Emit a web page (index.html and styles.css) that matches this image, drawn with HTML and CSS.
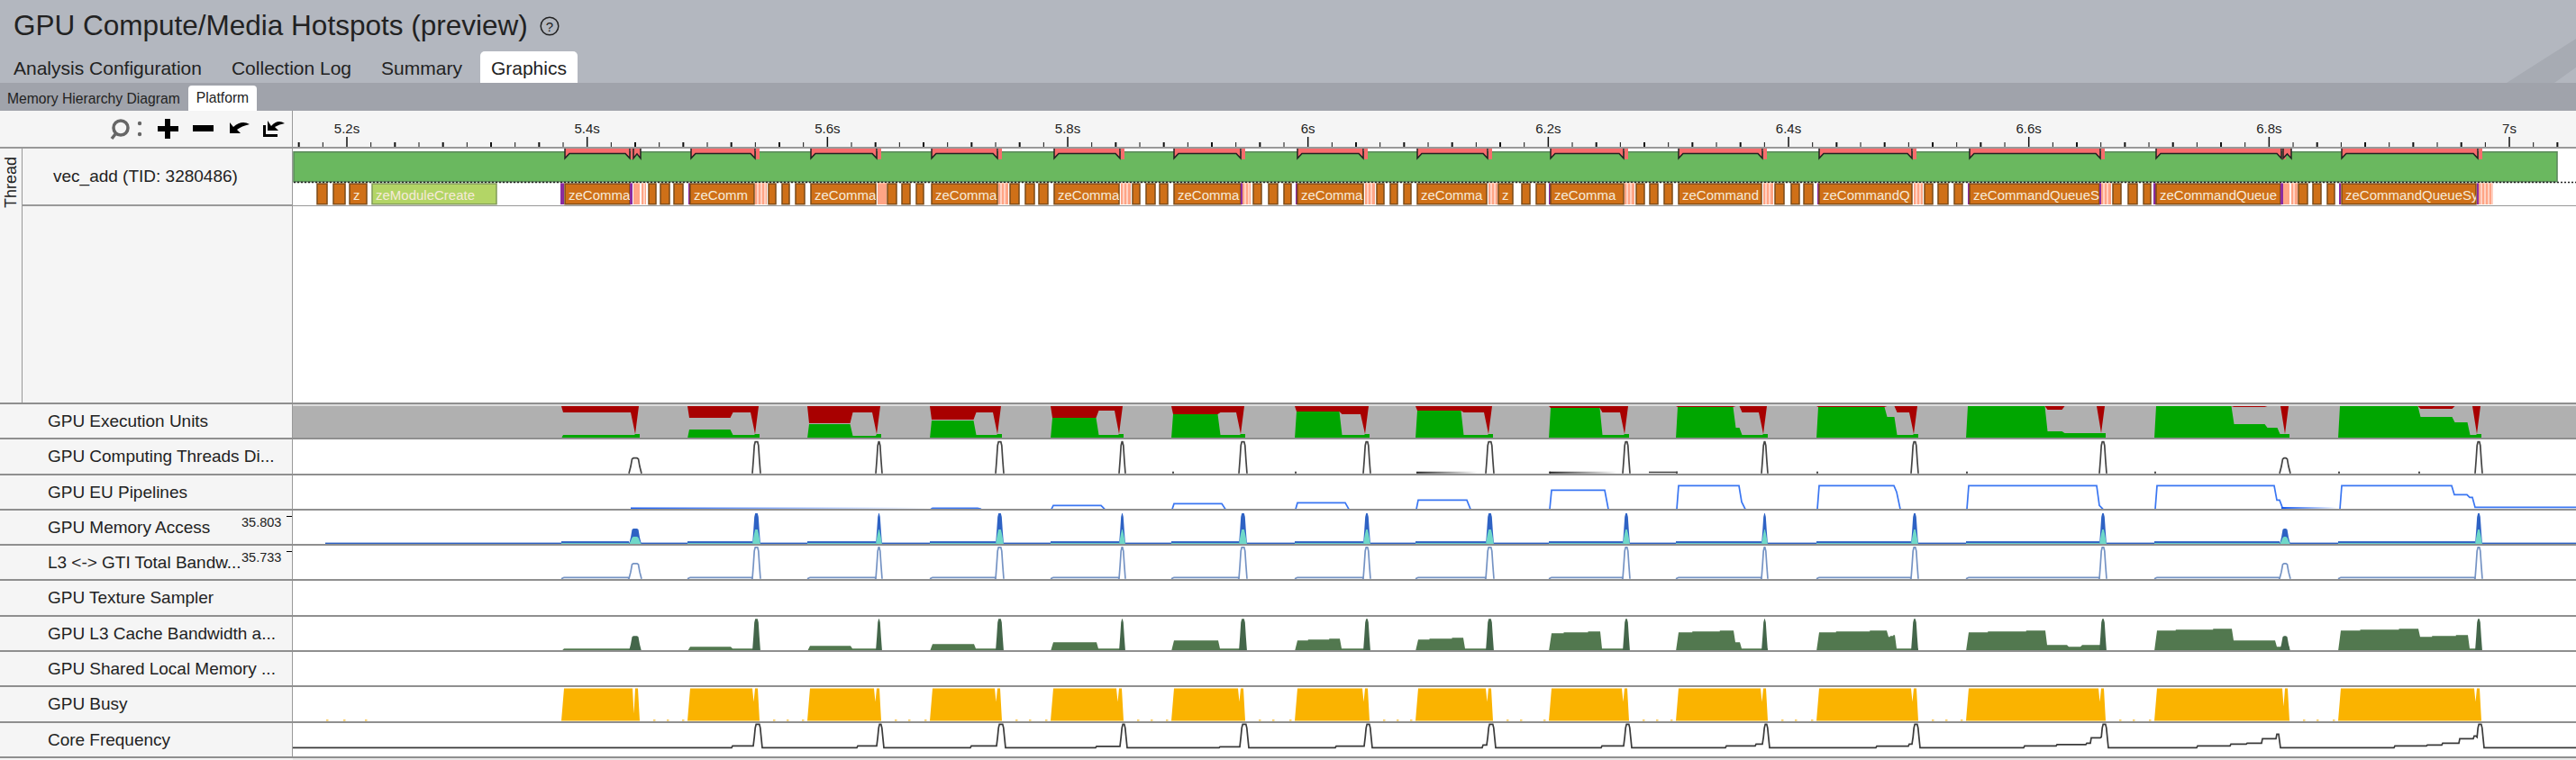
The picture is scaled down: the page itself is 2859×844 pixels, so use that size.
FILE: index.html
```html
<!DOCTYPE html>
<html lang="en">
<head>
    <meta charset="UTF-8">
    <title>GPU Compute/Media Hotspots (preview)</title>
    <link rel="stylesheet" href="styles.css">
</head>
<body>
    <header class="header">
        <div class="titleLine">
            <h1 class="title">GPU Compute/Media Hotspots (preview)</h1>
            <svg class="helpIcon" viewBox="0 0 22 22">
                <circle cx="11" cy="11" r="9.8"></circle>
                <text x="11" y="16.5">?</text>
            </svg>
        </div>
        <nav class="tabs">
            <span class="tab">Analysis Configuration</span>
            <span class="tab">Collection Log</span>
            <span class="tab">Summary</span>
            <span class="tab tabActive">Graphics</span>
        </nav>
    </header>
    <nav class="subTabs">
        <span class="subTab">Memory Hierarchy Diagram</span>
        <span class="subTab subTabActive">Platform</span>
    </nav>
    <div class="toolbar">
        <div class="tools">
            <svg class="toolIcons" viewBox="118 127 204 32">
                <circle class="lens" cx="134" cy="142" r="8"></circle>
                <path class="lens" d="M128 149L124 154"></path>
                <circle class="dot" cx="155" cy="137" r="2.2"></circle>
                <circle class="dot" cx="155" cy="149" r="2.2"></circle>
                <path class="tool" d="M183 132h6v8h9v6h-9v8h-6v-8h-8v-6h8z"></path>
                <path class="tool" d="M214 139h23v7h-23z"></path>
                <path class="tool" d="M255 136v12h12l-4-4q5-4 14-6q-9-5-18 3z"></path>
                <path class="tool" d="M297 134v11h12l-4-4q5-3 11-4q-8-5-15 3z"></path>
                <path class="tool" d="M292 139h3v10h13v3h-16z"></path>
            </svg>
        </div>
        <svg class="ruler" id="ruler" viewBox="325 123 2534 40" preserveAspectRatio="none"></svg>
    </div>
    <section class="threadArea">
        <div class="threadSide">
            <div class="threadTab"><span>Thread</span></div>
            <div class="threadName">vec_add (TID: 3280486)</div>
        </div>
        <div class="threadMain">
            <svg class="threadChart" id="threadChart" viewBox="325 165 2534 64" preserveAspectRatio="none"></svg>
        </div>
    </section>
    <section class="rows">
        <div class="row"><div class="rowName">GPU Execution Units</div><svg class="chart" data-chart="eu" preserveAspectRatio="none"></svg></div>
        <div class="row"><div class="rowName">GPU Computing Threads Di...</div><svg class="chart" data-chart="threads" preserveAspectRatio="none"></svg></div>
        <div class="row"><div class="rowName">GPU EU Pipelines</div><svg class="chart" data-chart="pipelines" preserveAspectRatio="none"></svg></div>
        <div class="row">
            <div class="rowName">GPU Memory Access</div>
            <div class="rowMax">35.803</div>
            <svg class="chart" data-chart="memory" preserveAspectRatio="none"></svg>
        </div>
        <div class="row">
            <div class="rowName rowNameShort">L3 &lt;-&gt; GTI Total Bandw...</div>
            <div class="rowMax">35.733</div>
            <svg class="chart" data-chart="gti" preserveAspectRatio="none"></svg>
        </div>
        <div class="row"><div class="rowName">GPU Texture Sampler</div><svg class="chart" preserveAspectRatio="none"></svg></div>
        <div class="row"><div class="rowName">GPU L3 Cache Bandwidth a...</div><svg class="chart" data-chart="l3" preserveAspectRatio="none"></svg></div>
        <div class="row"><div class="rowName">GPU Shared Local Memory ...</div><svg class="chart" preserveAspectRatio="none"></svg></div>
        <div class="row"><div class="rowName">GPU Busy</div><svg class="chart" data-chart="busy" preserveAspectRatio="none"></svg></div>
        <div class="row"><div class="rowName">Core Frequency</div><svg class="chart" data-chart="freq" preserveAspectRatio="none"></svg></div>
    </section>
    <div class="bottomStrip"><div class="bottomLeft"></div></div>
    <script src="charts.js"></script>
</body>
</html>
```
FILE: styles.css
```css
* {
    box-sizing: border-box;
}
html, body {
    margin: 0;
    height: 844px;
    overflow: hidden;
    background-color: white;
    color: #222;
    font-family: "Liberation Sans", Arial, sans-serif;
}

.header {
    position: relative;
    height: 92px;
    background-color: #b3b7bf;
    overflow: hidden;
}
.header::after {
    content: "";
    position: absolute;
    right: 0;
    bottom: 0;
    width: 77px;
    height: 49px;
    background-color: #a7abb3;
    clip-path: polygon(0 100%, 100% 0, 100% 65%, 69% 100%);
}
.titleLine {
    display: flex;
    align-items: center;
    height: 57px;
    padding-left: 15px;
}
.title {
    margin: 0;
    font-size: 31.5px;
    font-weight: normal;
}
.helpIcon {
    width: 22px;
    height: 22px;
    margin-left: 13px;
}
.helpIcon circle {
    fill: none;
    stroke: #222;
    stroke-width: 1.5;
}
.helpIcon text {
    font-size: 15px;
    text-anchor: middle;
    fill: #222;
}
.tabs {
    display: flex;
    height: 35px;
    padding-left: 15px;
    font-size: 21px;
}
.tab {
    margin-right: 33px;
    line-height: 38px;
}
.tabActive {
    margin-left: -13px;
    padding: 0 12px;
    background-color: white;
    border-radius: 5px 5px 0 0;
}

.subTabs {
    display: flex;
    align-items: flex-end;
    height: 31px;
    padding-left: 8px;
    background-color: #a0a3ab;
    font-size: 15.7px;
}
.subTab {
    line-height: 27px;
}
.subTabActive {
    height: 28px;
    margin-left: 9px;
    padding: 0 9px;
    background-color: white;
    border-radius: 4px 4px 0 0;
}

.toolbar {
    display: flex;
    height: 42px;
    background-color: #f5f5f5;
    border-bottom: 2px solid #999;
}
.tools {
    width: 325px;
    flex: none;
    border-right: 1px solid #999;
}
.toolIcons {
    display: block;
    width: 204px;
    height: 32px;
    margin: 4px 0 0 118px;
}
.lens {
    fill: none;
    stroke: #666;
    stroke-width: 3.5;
}
.dot {
    fill: #666;
}
.tool {
    fill: black;
}
.ruler {
    flex: 1;
    height: 40px;
}
.rulerLabel {
    font-size: 15px;
    text-anchor: middle;
    fill: #222;
}
.tick {
    fill: #111;
}

.threadArea {
    display: flex;
    height: 284px;
    border-bottom: 2px solid #8f8f8f;
}
.threadSide {
    display: flex;
    width: 325px;
    flex: none;
    align-items: flex-start;
    background-color: #f5f5f5;
    border-right: 1px solid #999;
}
.threadTab {
    display: flex;
    width: 25px;
    height: 100%;
    flex: none;
    justify-content: center;
    padding-top: 8px;
    border-right: 1px solid #999;
}
.threadTab span {
    height: 58px;
    writing-mode: vertical-rl;
    transform: rotate(180deg);
    font-size: 18px;
    line-height: 24px;
}
.threadName {
    flex: 1;
    height: 64px;
    padding-left: 34px;
    border-bottom: 2px solid #999;
    font-size: 19px;
    line-height: 62px;
}
.threadMain {
    flex: 1;
}
.threadChart {
    display: block;
    width: 100%;
    height: 64px;
    border-bottom: 1px solid #999;
}
.greenBar {
    fill: #6ab85f;
    stroke: #5c8a5c;
    stroke-width: 1.6;
}
.dashLine {
    stroke: #222;
    stroke-width: 1.5;
    stroke-dasharray: 2 2;
}
.markerBody {
    fill: #f76d6d;
}
.markerEdge {
    fill: none;
    stroke: #222;
    stroke-width: 1.5;
}
.taskBox {
    fill: #cf7018;
    stroke: #7b4a17;
    stroke-width: 1.5;
}
.taskModule {
    fill: #b3d566;
    stroke: #809a58;
    stroke-width: 1.5;
}
.taskEdge {
    fill: #8a2ca0;
}
.taskSalmon {
    fill: #ffa586;
}
.taskStripe {
    stroke: white;
    stroke-width: 1;
}
.taskText {
    font-size: 15px;
    fill: #f6ead9;
}

.rows {
    display: grid;
    grid-auto-rows: 39.3px;
}
.row {
    position: relative;
    display: flex;
    border-bottom: 2px solid #8f8f8f;
}
.rowName {
    width: 325px;
    flex: none;
    padding-left: 53px;
    background-color: #f5f5f5;
    border-right: 1px solid #999;
    font-size: 19px;
    line-height: 37px;
    white-space: nowrap;
    letter-spacing: -0.02px;
}
.rowMax {
    position: absolute;
    top: 4px;
    left: 268px;
    width: 56px;
    font-size: 14.5px;
    line-height: 18px;
}
.rowMax::after {
    content: "";
    position: absolute;
    top: 2px;
    right: 0;
    width: 6px;
    height: 1px;
    background-color: black;
}
.chart {
    flex: 1;
    height: 100%;
    min-width: 0;
}
.euGrey {
    fill: #b0b0b0;
}
.euTop {
    fill: #dcdcdc;
}
.euRed {
    fill: #a80000;
}
.euGreen {
    fill: #00a600;
}
.threadLine {
    fill: none;
    stroke: #444;
    stroke-width: 1.7;
}
.threadDot {
    fill: #444;
}
.pipeLine {
    fill: none;
    stroke: #3a76f2;
    stroke-width: 1.7;
}
.memBlue {
    fill: #2e62c4;
}
.memTeal {
    fill: #6fd8c8;
}
.gtiLine {
    fill: none;
    stroke: #7593c4;
    stroke-width: 1.7;
}
.l3Fill {
    fill: #52784f;
}
.l3Spike {
    fill: #44664a;
}
.busyFill {
    fill: #fab300;
}
.busyDot {
    fill: #fbc54a;
}
.freqLine {
    fill: none;
    stroke: #3a3a3a;
    stroke-width: 1.7;
}
.fadeLine {
    fill: none;
    stroke-width: 2;
}

.bottomStrip {
    height: 2px;
    background-color: #e8e8e8;
}
.bottomLeft {
    width: 325px;
    height: 100%;
    background-color: #f5f5f5;
}
```
FILE: charts.js
```js
// per burst: s/e = x range, sp = spike x range, low = flat low spike instead of a peak
// eu = [x end, red depth, green height], pipe = [x end, y], l3 = [x end, height], freq = [x, y] steps
const bursts = [
    {s: 623, e: 710, sp: [698, 712], low: true, noFreqSpike: true,
        eu: [[697, 7, 4]], pipe: [], l3: [[697, 3]], freq: [], notch: 793},
    {s: 763, e: 843, sp: [835, 844],
        eu: [[812, 13, 10], [843, 7, 4]], pipe: [], l3: [[812, 5], [843, 3]], freq: [[812, 828]]},
    {s: 896, e: 978, sp: [972, 979],
        eu: [[945, 19, 16], [978, 7, 3]], pipe: [], l3: [[945, 6], [978, 3]], freq: [[951, 828]]},
    {s: 1032, e: 1112, sp: [1105, 1114],
        eu: [[1082, 15, 20], [1112, 7, 4]], pipe: [[1033, 564], [1084, 564]], l3: [[1082, 8], [1112, 3]], freq: [[1077, 828]]},
    {s: 1166, e: 1247, sp: [1242, 1249],
        eu: [[1218, 13, 23], [1247, 5, 4]], pipe: [[1167, 561], [1221, 561]], l3: [[1218, 10], [1247, 3]], freq: [[1216, 828.5]]},
    {s: 1300, e: 1382, sp: [1375, 1384],
        eu: [[1353, 9, 27], [1382, 7, 4]], pipe: [[1301, 559], [1355, 559]], l3: [[1353, 12], [1382, 3]], freq: [[1353, 829]]},
    {s: 1437, e: 1520, sp: [1513, 1521],
        eu: [[1488, 6, 30], [1520, 9, 4]], pipe: [[1438, 558], [1492, 558]], l3: [[1488, 14], [1520, 3]], freq: [[1482, 828.3]]},
    {s: 1571, e: 1657, sp: [1649, 1658],
        eu: [[1623, 5, 31], [1657, 7, 4]], pipe: [[1572, 555], [1627, 555]], l3: [[1625, 15], [1657, 3]], freq: [[1645, 827]]},
    {s: 1719, e: 1808, sp: [1801, 1809],
        eu: [[1777, 2, 34], [1808, 7, 4]], pipe: [[1720, 544], [1780, 544]], l3: [[1777, 22], [1808, 3]], freq: [[1777, 828]]},
    {s: 1860, e: 1962, sp: [1955, 1962],
        eu: [[1925, 1, 35], [1932, 0, 12], [1962, 7, 4]], pipe: [[1861, 539], [1925, 539], [1932, 557]], l3: [[1925, 23], [1932, 10], [1962, 3]], freq: [[1915, 828], [1948, 826]]},
    {s: 2016, e: 2129, sp: [2121, 2129],
        eu: [[2093, 1, 35], [2104, 0, 24], [2129, 7, 4]], pipe: [[2017, 539], [2095, 539], [2104, 546]], l3: [[2095, 23], [2104, 18], [2129, 3]], freq: [[2082, 828.3], [2118, 826]]},
    {s: 2182, e: 2337, sp: [2330, 2338],
        eu: [[2271, 0, 36], [2290, 4, 8], [2337, 0, 6]], pipe: [[2183, 539], [2271, 539], [2329, 561]], l3: [[2271, 23], [2295, 7], [2310, 5], [2337, 7]], freq: [[2246, 828], [2282, 826.6], [2315, 825], [2320, 819]]},
    {s: 2391, e: 2541, sp: [2530, 2542], low: true, noFreqSpike: true,
        eu: [[2478, 0, 36], [2515, 1, 16], [2529, 0, 12], [2541, 0, 5]], pipe: [[2392, 539], [2478, 539], [2526, 555], [2532, 563]], l3: [[2478, 25], [2526, 12], [2541, 5]], freq: [[2438, 828], [2475, 826], [2493, 825], [2510, 820], [2526, 815]], notch: 785},
    {s: 2595, e: 2754, sp: [2747, 2755],
        eu: [[2685, 0, 36], [2723, 3, 24], [2740, 0, 18], [2754, 0, 4]], pipe: [[2597, 539], [2685, 539], [2723, 549], [2740, 552], [2746, 563], [2859, 563]], l3: [[2685, 25], [2740, 18], [2754, 3]], freq: [[2657, 828], [2693, 827], [2710, 825], [2729, 820], [2745, 817]]}
];

// [x0, x1, kind, label]  b box, m module, p purple edge, s salmon, t pale stripes
const tasks = [
    [352, 363, "b"], [370, 383, "b"], [388, 407, "b", "z"], [413, 551, "m", "zeModuleCreate"],
    [622, 626, "p"], [627, 699, "b", "zeComma"], [699, 702, "p"], [703, 710, "s"], [712, 717, "t"],
    [720, 728, "b"], [733, 743, "b"], [748, 758, "b"],
    [764, 766, "p"], [766, 837, "b", "zeComm"], [838, 851, "t"], [853, 861, "b"], [868, 876, "b"], [883, 893, "b"],
    [900, 972, "b", "zeComma"], [974, 984, "s"], [985, 995, "b"], [1001, 1010, "b"], [1017, 1025, "b"],
    [1034, 1107, "b", "zeComma"], [1108, 1119, "t"], [1121, 1131, "b"], [1138, 1148, "b"], [1153, 1163, "b"],
    [1170, 1242, "b", "zeComma"], [1244, 1255, "t"], [1257, 1265, "b"], [1272, 1282, "b"], [1287, 1296, "b"],
    [1303, 1377, "b", "zeComma"], [1377, 1379, "p"], [1379, 1388, "t"], [1391, 1400, "b"], [1408, 1418, "b"], [1425, 1433, "b"],
    [1438, 1440, "p"], [1440, 1513, "b", "zeComma"], [1515, 1526, "t"], [1528, 1536, "b"], [1543, 1551, "b"], [1558, 1566, "b"],
    [1573, 1650, "b", "zeComma"], [1652, 1662, "t"], [1663, 1679, "b", "z"], [1689, 1698, "b"], [1705, 1715, "b"],
    [1719, 1721, "p"], [1721, 1802, "b", "zeComma"], [1803, 1814, "t"], [1816, 1825, "b"], [1831, 1840, "b"], [1847, 1856, "b"],
    [1863, 1955, "b", "zeCommand"], [1957, 1968, "t"], [1970, 1980, "b"], [1988, 1997, "b"], [2002, 2012, "b"],
    [2017, 2019, "p"], [2019, 2122, "b", "zeCommandQ"], [2124, 2134, "t"], [2136, 2145, "b"], [2151, 2162, "b"], [2169, 2178, "b"],
    [2184, 2186, "p"], [2186, 2330, "b", "zeCommandQueueS"], [2330, 2332, "p"], [2332, 2343, "t"], [2345, 2354, "b"], [2362, 2372, "b"], [2379, 2387, "b"],
    [2390, 2393, "p"], [2393, 2531, "b", "zeCommandQueue"], [2531, 2534, "p"], [2534, 2541, "s"], [2543, 2550, "t"], [2551, 2561, "b"], [2567, 2576, "b"], [2583, 2591, "b"],
    [2596, 2598, "p"], [2599, 2748, "b", "zeCommandQueueSy"], [2749, 2751, "p"], [2751, 2767, "t"]
];

const markers = [
    [627, 699], [767, 838], [900, 973], [1034, 1107], [1170, 1243], [1303, 1377], [1440, 1513],
    [1573, 1651], [1721, 1802], [1863, 1956], [2019, 2122], [2186, 2331], [2393, 2532], [2599, 2750]
];
const smallMarkers = [[703, 711], [2534, 2543]];

function pts(list) {
    return list.map(p => p[0] + "," + p[1]).join(" ");
}

function poly(cls, list) {
    return `<polygon class="${cls}" points="${pts(list)}"></polygon>`;
}

function line(cls, list) {
    return `<polyline class="${cls}" points="${pts(list)}"></polyline>`;
}

function rect(cls, x, y, w, h) {
    return `<rect class="${cls}" x="${x}" y="${y}" width="${w}" height="${h}"></rect>`;
}

let fadeCount = 0;
//horizontal line going from a solid colour to nothing
function fadeLine(color, x1, x2, y) {
    let id = "fade" + (++fadeCount);
    return `<defs><linearGradient id="${id}" gradientUnits="userSpaceOnUse" x1="${x1}" y1="0" x2="${x2}" y2="0">` +
        `<stop offset="0" stop-color="${color}"></stop><stop offset="1" stop-color="${color}" stop-opacity="0"></stop></linearGradient></defs>` +
        `<line class="fadeLine" x1="${x1}" y1="${y}" x2="${x2}" y2="${y}" stroke="url(#${id})"></line>`;
}

function spikePoints(sp, base, top) {
    let a = sp[0], b = sp[1];
    let mid = top + (base - top) * 0.55;
    if (b - a > 10) {
        //the low ones are flat on top
        return [[a, base], [a + 2, mid], [a + 3.5, top + 1], [a + 5, top], [b - 5, top], [b - 3.5, top + 1], [b - 2, mid], [b, base]];
    }
    return [[a, base], [a + 1.2, mid], [a + 2.2, top + 4], [a + 3.2, top], [b - 3.2, top], [b - 2.2, top + 4], [b - 1.2, mid], [b, base]];
}

function renderRuler() {
    let out = "";
    const labels = ["5.2s", "5.4s", "5.6s", "5.8s", "6s", "6.2s", "6.4s", "6.6s", "6.8s", "7s"];
    const step = 26.667;
    for (let i = -2; i <= 92; i++) {
        let x = 385 + i * step;
        if (i % 10 == 0) {
            out += rect("tick", x - 0.75, 152, 1.5, 11);
        } else if (i % 2 == 0) {
            out += rect("tick", x - 1, 158, 2, 5);
        } else {
            out += rect("tick", x - 0.5, 158, 1, 5);
        }
    }
    labels.forEach((label, i) => {
        out += `<text class="rulerLabel" x="${385 + i * 266.67}" y="148">${label}</text>`;
    });
    document.getElementById("ruler").innerHTML = out;
}

function renderThread() {
    let out = rect("greenBar", 326, 168.8, 2512, 33.5);
    out += `<line class="dashLine" x1="326" y1="203" x2="2859" y2="203"></line>`;
    for (let m of markers) {
        out += poly("markerBody", [[m[0], 165], [m[1], 165], [m[1], 176], [m[1] - 5, 170.5], [m[0] + 5, 170.5], [m[0], 176]]);
        out += line("markerEdge", [[m[0], 165], [m[0], 176], [m[0] + 5, 170.5], [m[1] - 5, 170.5], [m[1], 176], [m[1], 165]]);
        out += rect("markerBody", m[1] + 1, 165, 4, 12);
    }
    for (let m of smallMarkers) {
        let list = [[m[0], 165], [m[0], 176], [(m[0] + m[1]) / 2, 171], [m[1], 176], [m[1], 165]];
        out += poly("markerBody", list) + line("markerEdge", list);
    }
    for (let t of tasks) {
        let w = t[1] - t[0];
        if (t[2] == "b" || t[2] == "m") {
            out += rect(t[2] == "b" ? "taskBox" : "taskModule", t[0], 204.7, w, 23);
            if (t[3]) {
                out += `<svg x="${t[0]}" y="204" width="${w}" height="25"><text class="taskText" x="4" y="18.5">${t[3]}</text></svg>`;
            }
        } else if (t[2] == "p") {
            out += rect("taskEdge", t[0], 204, w, 24);
        } else {
            out += rect("taskSalmon", t[0], 204, w, 24);
            if (t[2] == "t") {
                for (let x = t[0] + 3; x < t[1]; x += 4) {
                    out += `<line class="taskStripe" x1="${x}" y1="204" x2="${x}" y2="228"></line>`;
                }
            }
        }
    }
    document.getElementById("threadChart").innerHTML = out;
}

function drawEu() {
    let out = rect("euGrey", 325, 449, 2534, 39) + rect("euTop", 325, 449, 2534, 2);
    for (let b of bursts) {
        let red = [[b.s, 451]];
        let green = [[b.s, 487]];
        let x = b.s + 2;
        let vStart = b.e - 10;
        for (let st of b.eu) {
            let end = Math.min(st[0] - 1.5, vStart);
            red.push([x, 451 + st[1]], [end, 451 + st[1]]);
            green.push([x, 487 - st[2]], [st[0] >= b.e ? b.e - 6 : st[0] - 1.5, 487 - st[2]]);
            x = st[0] + 1.5;
        }
        let last = b.eu[b.eu.length - 1];
        //the narrow V at the end of the burst
        let h = Math.max(last[2], 5);
        if (red[red.length - 1][0] < vStart) red.push([vStart, 451 + last[1]]);
        red.push([b.e - 5, 487 - h], [b.e - 1, 451]);
        green.push([b.e - 6, 487 - last[2]], [b.e - 5, 487 - h], [b.e, 487 - h], [b.e, 487]);
        out += poly("euGreen", green) + poly("euRed", red);
    }
    return out;
}

function drawThreads() {
    let out = "";
    for (let b of bursts) {
        out += line("threadLine", spikePoints(b.sp, 526, b.low ? 509 : 491));
    }
    for (let x of [1301, 1437, 1719, 1860, 2016, 2182, 2391, 2595, 2684]) {
        out += rect("threadDot", x, 524, 2, 2);
    }
    out += fadeLine("#222", 1572, 1640, 525) + fadeLine("#222", 1720, 1795, 525) + rect("threadDot", 1830, 524, 32, 1.5);
    return out;
}

function drawPipelines() {
    let out = fadeLine("#1a5cf0", 700, 1030, 564);
    for (let b of bursts) {
        if (!b.pipe.length) continue;
        let list = [[b.pipe[0][0], 565], [b.pipe[0][0] + 2, b.pipe[0][1]]];
        let y = b.pipe[0][1];
        for (let st of b.pipe.slice(1)) {
            list.push([st[0] - 2, y], [st[0] + 1, st[1]]);
            y = st[1];
        }
        list.push([list[list.length - 1][0] + 4, 565]);
        out += line("pipeLine", list);
    }
    out += fadeLine("#1a5cf0", 2532, 2594, 563.5);
    return out;
}

function drawMemory() {
    let out = rect("memBlue", 361, 602.5, 2498, 2.2);
    for (let b of bursts) {
        out += rect("memBlue", b.s, 601, b.sp[0] - b.s, 2);
        out += rect("memTeal", b.s, 603, b.sp[0] - b.s, 1.7);
        out += poly("memBlue", spikePoints(b.sp, 604.5, b.low ? 587 : 570));
        out += poly("memTeal", spikePoints(b.sp, 604.5, b.low ? 596 : 588));
    }
    return out;
}

function drawGti() {
    let out = "";
    for (let b of bursts) {
        let top = b.low ? 626 : 608;
        out += line("gtiLine", [[b.s, 643], [b.s + 3, 641.5], [b.sp[0] - 1, 641.5]].concat(spikePoints(b.sp, 643, top)));
    }
    return out;
}

function drawL3() {
    let out = "";
    for (let b of bursts) {
        let list = [[b.s, 723]];
        let x = b.s + 3;
        for (let st of b.l3) {
            let y = 723 - st[1];
            if (st[1] > 12) {
                //tall phases creep up a little in small steps
                let w = (st[0] - 1 - x) / 4;
                list.push([x, y + 2], [x + w, y + 2], [x + w, y + 1], [x + 3 * w, y + 1], [x + 3 * w, y]);
            } else {
                list.push([x, y]);
            }
            list.push([st[0] - 1, y]);
            x = st[0] + 1;
        }
        list.push([b.e, 723 - b.l3[b.l3.length - 1][1]], [b.e, 723]);
        out += poly("l3Fill", list);
        out += poly("l3Spike", spikePoints(b.sp, 723, b.low ? 706 : 687));
    }
    return out;
}

function drawBusy() {
    let out = "";
    for (let i = 0; i < bursts.length; i++) {
        let b = bursts[i];
        let n = b.e - 8;
        out += poly("busyFill", [[b.s, 801], [b.s + 3, 765], [n, 765], [n + 1.5, b.notch || 780], [n + 3, 765], [b.e - 2, 765], [b.e, 801]]);
        let next = bursts[i + 1];
        if (next) {
            for (let x of [b.e + 15, b.e + 30, next.s - 6]) {
                out += rect("busyDot", x, 799.5, 2.5, 1.5);
            }
        }
    }
    for (let x of [362, 381, 405]) {
        out += rect("busyDot", x, 799.5, 2.5, 1.5);
    }
    return out;
}

function drawFreq() {
    let list = [[325, 830]];
    for (let b of bursts) {
        let y = 830;
        for (let st of b.freq) {
            list.push([st[0], y], [st[0] + 1, st[1]]);
            y = st[1];
        }
        if (b.noFreqSpike) {
            if (y != 830) list.push([b.e - 12, y], [b.e - 10, 830]);
            continue;
        }
        list.push([b.sp[0] + 1, y]);
        list = list.concat(spikePoints([b.sp[0] + 1, b.sp[1] + 2], 830, 804).slice(1));
    }
    list.push([2859, 830]);
    return line("freqLine", list);
}

const drawers = {
    eu: drawEu,
    threads: drawThreads,
    pipelines: drawPipelines,
    memory: drawMemory,
    gti: drawGti,
    l3: drawL3,
    busy: drawBusy,
    freq: drawFreq
};

function renderRows() {
    let charts = document.querySelectorAll(".chart");
    charts.forEach((svg, i) => {
        svg.setAttribute("viewBox", `325 ${449 + 39.3 * i} 2534 37.3`);
        let name = svg.dataset.chart;
        if (name) svg.innerHTML = drawers[name]();
    });
}

renderRuler();
renderThread();
renderRows();
```
